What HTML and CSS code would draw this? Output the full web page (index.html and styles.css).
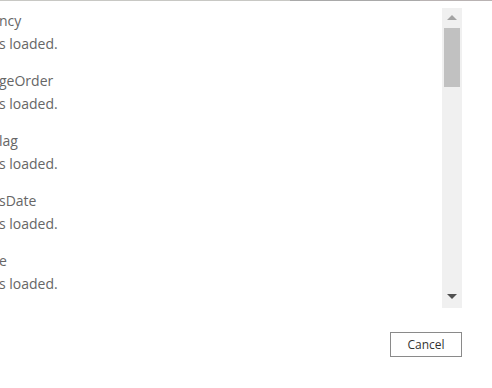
FILE: index.html
```html
<!DOCTYPE html>
<html lang="en">
<head>
  <meta charset="UTF-8">
  <meta name="viewport" content="width=device-width, initial-scale=1.0">
  <title>Loading</title>
  <link rel="stylesheet" href="styles.css">
</head>
<body>
  <div class="edge"></div>
  <div class="panel">
    <div class="list">
      <div class="item"><p>ncy</p><p>s loaded.</p></div>
      <div class="item"><p>geOrder</p><p>s loaded.</p></div>
      <div class="item"><p>lag</p><p>s loaded.</p></div>
      <div class="item"><p>sDate</p><p>s loaded.</p></div>
      <div class="item"><p>e</p><p>s loaded.</p></div>
    </div>
    <div class="scrollbar">
      <div class="arrow up"></div>
      <div class="thumb"></div>
      <div class="space"></div>
      <div class="arrow down"></div>
    </div>
  </div>
  <div class="footer">
    <button class="cancel">Cancel</button>
  </div>
</body>
</html>
```
FILE: styles.css
```css
* {
  margin: 0;
  padding: 0;
  box-sizing: border-box;
}
body {
  background-color: #fff;
  font-family: "Open Sans", "Liberation Sans", sans-serif;
  overflow: hidden;
}
.edge {
  height: 1px;
  background: linear-gradient(to right, #c8c8c4 0, #c8c8c4 290px, #a9a9a9 290px, #a9a9a9 420px, #b9b3b3 420px);
}
.panel {
  display: flex;
  height: 300px;
  margin-top: 7px;
  margin-right: 30px;
}
.list {
  flex: 1;
  overflow: hidden;
  padding-top: 2px;
  margin-left: -1px;
}
.item {
  margin-bottom: 15px;
}
.item p {
  font-size: 14px;
  line-height: 22.5px;
  color: #666;
  white-space: nowrap;
}
.scrollbar {
  width: 20px;
  background-color: #f0f0f0;
  display: flex;
  flex-direction: column;
  align-items: center;
}
.arrow {
  width: 0;
  height: 0;
  border-left: 5px solid transparent;
  border-right: 5px solid transparent;
}
.up {
  margin-top: 7px;
  border-bottom: 5px solid #a3a3a3;
}
.thumb {
  width: 16px;
  height: 59px;
  margin-top: 8px;
  background-color: #c1c1c1;
}
.space {
  flex: 1;
}
.down {
  margin-bottom: 9px;
  border-top: 5px solid #505050;
}
.footer {
  display: flex;
  justify-content: flex-end;
  padding-right: 30px;
  margin-top: 24px;
}
.cancel {
  width: 72px;
  height: 25px;
  border: 1px solid #8a8a8a;
  background-color: #fff;
  font-family: "Open Sans", "Liberation Sans", sans-serif;
  font-size: 12px;
  color: #333;
}
```
